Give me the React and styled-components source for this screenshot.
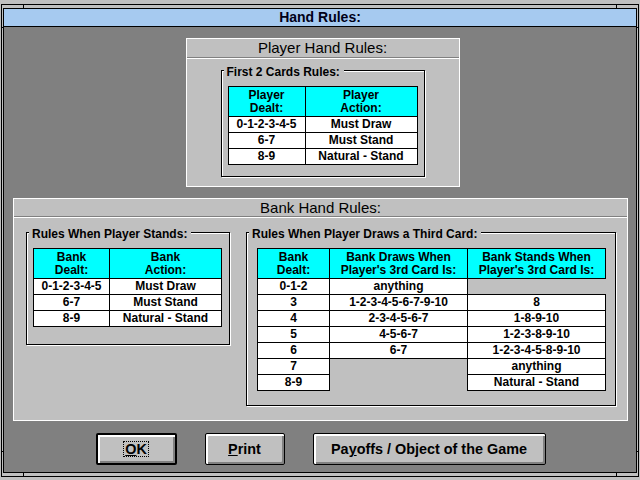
import React from 'react';
import styled, { createGlobalStyle } from 'styled-components';

const GlobalStyle = createGlobalStyle`
  html, body {
    margin: 0;
    padding: 0;
    background: #c0c0c0;
  }
  body {
    width: 640px;
    height: 480px;
    overflow: hidden;
    font-family: "Liberation Sans", Arial, sans-serif;
    color: #000;
  }
  * {
    box-sizing: border-box;
  }
`;

const Frame = styled.div`
  position: relative;
  width: 640px;
  height: 480px;
  padding: 4px 1px 3px 1px;
`;

const Outer = styled.div`
  height: 100%;
  border: 1px solid #000;
  padding: 3px 1px 3px 1px;
`;

const Tick = styled.span`
  position: absolute;
  background: #000;
  left: ${p => p.x}px;
  top: ${p => p.y}px;
  width: ${p => p.w}px;
  height: ${p => p.h}px;
`;

const Win = styled.div`
  height: 100%;
  border: 1px solid #000;
  background: #808080;
  display: flex;
  flex-direction: column;
`;

const TitleBar = styled.div`
  height: 18px;
  border-bottom: 1px solid #000;
  background: #a6caf0;
  text-align: center;
  line-height: 17px;
  font-size: 14px;
  font-weight: bold;
  color: #000018;
`;

const Body = styled.div`
  flex: 1;
  display: flex;
  flex-direction: column;
  align-items: center;
  padding: 11px 0 0 1px;
`;

const Panel = styled.div`
  width: ${p => p.w}px;
  height: ${p => p.h}px;
  margin-top: ${p => p.mt || 0}px;
  margin-left: ${p => p.shift || 0}px;
  border: 1px solid #fff;
  background: #c0c0c0;
  display: flex;
  flex-direction: column;
`;

const PanelHead = styled.div`
  height: ${p => p.h}px;
  line-height: ${p => p.h - 1}px;
  border-bottom: 1px solid #808080;
  text-align: center;
  font-size: 15px;
  color: #000;
`;

const PanelBody = styled.div`
  flex: 1;
  border-top: 1px solid #fff;
  display: flex;
  align-items: flex-start;
  justify-content: ${p => p.center ? 'center' : 'flex-start'};
  gap: 16px;
  padding: ${p => p.pad};
`;

const Group = styled.div`
  position: relative;
  border: 1px solid #000;
  box-shadow: 1px 1px 0 #fff, inset 1px 1px 0 #fff;
  padding: ${p => p.pad};
`;

const GroupLabel = styled.span`
  position: absolute;
  top: -6px;
  left: 2px;
  padding: 0 4px 0 3px;
  background: #c0c0c0;
  font-size: 12px;
  font-weight: bold;
  line-height: 14px;
  white-space: nowrap;
`;

const Grid = styled.div`
  display: grid;
  grid-template-columns: ${p => p.cols};
  grid-template-rows: 30px;
  grid-auto-rows: 16px;
  padding: 1px 0 0 1px;
`;

const Cell = styled.div`
  margin: -1px 0 0 -1px;
  border: 1px solid #000;
  background: ${p => p.head ? '#00ffff' : '#fff'};
  display: flex;
  flex-direction: column;
  align-items: center;
  justify-content: center;
  font-size: 12px;
  font-weight: bold;
  line-height: 13px;
  text-align: center;
  white-space: nowrap;
`;

const Blank = styled.div``;

const ButtonRow = styled.div`
  display: flex;
  gap: 28px;
  margin-top: 12px;
`;

const Button = styled.button`
  appearance: none;
  width: ${p => p.w}px;
  height: 32px;
  padding: 0;
  border: ${p => p.primary ? 2 : 1}px solid #000;
  border-radius: 2px;
  background: #c0c0c0;
  box-shadow: inset 2px 2px 0 #fff, inset -2px -2px 0 #808080;
  font-family: inherit;
  font-size: 14.4px;
  font-weight: bold;
  color: #000;
  display: flex;
  align-items: center;
  justify-content: center;
`;

const Focus = styled.span`
  border: 1px dotted #000;
  padding: 0 1px;
  line-height: 14px;
`;

function RuleTable({ cols, head, rows }) {
  return (
    <Grid cols={cols}>
      {head.map((h, i) => (
        <Cell head key={'h' + i}>
          <span>{h[0]}</span>
          <span>{h[1]}</span>
        </Cell>
      ))}
      {rows.map((r, ri) =>
        r.map((c, ci) =>
          c === null ? <Blank key={ri + '-' + ci} /> : <Cell key={ri + '-' + ci}>{c}</Cell>
        )
      )}
    </Grid>
  );
}

const firstRows = [
  ['0-1-2-3-4-5', 'Must Draw'],
  ['6-7', 'Must Stand'],
  ['8-9', 'Natural - Stand'],
];

const thirdRows = [
  ['0-1-2', 'anything', null],
  ['3', '1-2-3-4-5-6-7-9-10', '8'],
  ['4', '2-3-4-5-6-7', '1-8-9-10'],
  ['5', '4-5-6-7', '1-2-3-8-9-10'],
  ['6', '6-7', '1-2-3-4-5-8-9-10'],
  ['7', null, 'anything'],
  ['8-9', null, 'Natural - Stand'],
];

export default function App() {
  return (
    <>
      <GlobalStyle />
      <Frame>
        <Tick x={23} y={4} w={1} h={5} />
        <Tick x={616} y={4} w={1} h={5} />
        <Tick x={23} y={472} w={1} h={5} />
        <Tick x={616} y={472} w={1} h={5} />
        <Tick x={1} y={27} w={3} h={1} />
        <Tick x={1} y={451} w={3} h={1} />
        <Tick x={636} y={27} w={3} h={1} />
        <Tick x={636} y={451} w={3} h={1} />
        <Outer>
          <Win>
            <TitleBar>Hand Rules:</TitleBar>
            <Body>
              <Panel w={274} h={149} shift={4}>
                <PanelHead h={19}>Player Hand Rules:</PanelHead>
                <PanelBody center pad="11px 0 0 0">
                  <Group pad="15px 6px 11px 6px">
                    <GroupLabel>First 2 Cards Rules:</GroupLabel>
                    <RuleTable
                      cols="77px 112px"
                      head={[['Player', 'Dealt:'], ['Player', 'Action:']]}
                      rows={firstRows}
                    />
                  </Group>
                </PanelBody>
              </Panel>

              <Panel w={615} h={223} mt={11}>
                <PanelHead h={18}>Bank Hand Rules:</PanelHead>
                <PanelBody pad="14px 0 0 12px">
                  <Group pad="15px 7px 17px 6px">
                    <GroupLabel>Rules When Player Stands:</GroupLabel>
                    <RuleTable
                      cols="76px 112px"
                      head={[['Bank', 'Dealt:'], ['Bank', 'Action:']]}
                      rows={firstRows}
                    />
                  </Group>
                  <Group pad="15px 9px 14px 10px">
                    <GroupLabel>Rules When Player Draws a Third Card:</GroupLabel>
                    <RuleTable
                      cols="72px 138px 138px"
                      head={[
                        ['Bank', 'Dealt:'],
                        ['Bank Draws When', "Player's 3rd Card Is:"],
                        ['Bank Stands When', "Player's 3rd Card Is:"],
                      ]}
                      rows={thirdRows}
                    />
                  </Group>
                </PanelBody>
              </Panel>

              <ButtonRow>
                <Button primary w={81}>
                  <Focus><u>O</u>K</Focus>
                </Button>
                <Button w={80}>
                  <span><u>P</u>rint</span>
                </Button>
                <Button w={233}>
                  <span>Pa<u>y</u>offs / Object of the Game</span>
                </Button>
              </ButtonRow>
            </Body>
          </Win>
        </Outer>
      </Frame>
    </>
  );
}
